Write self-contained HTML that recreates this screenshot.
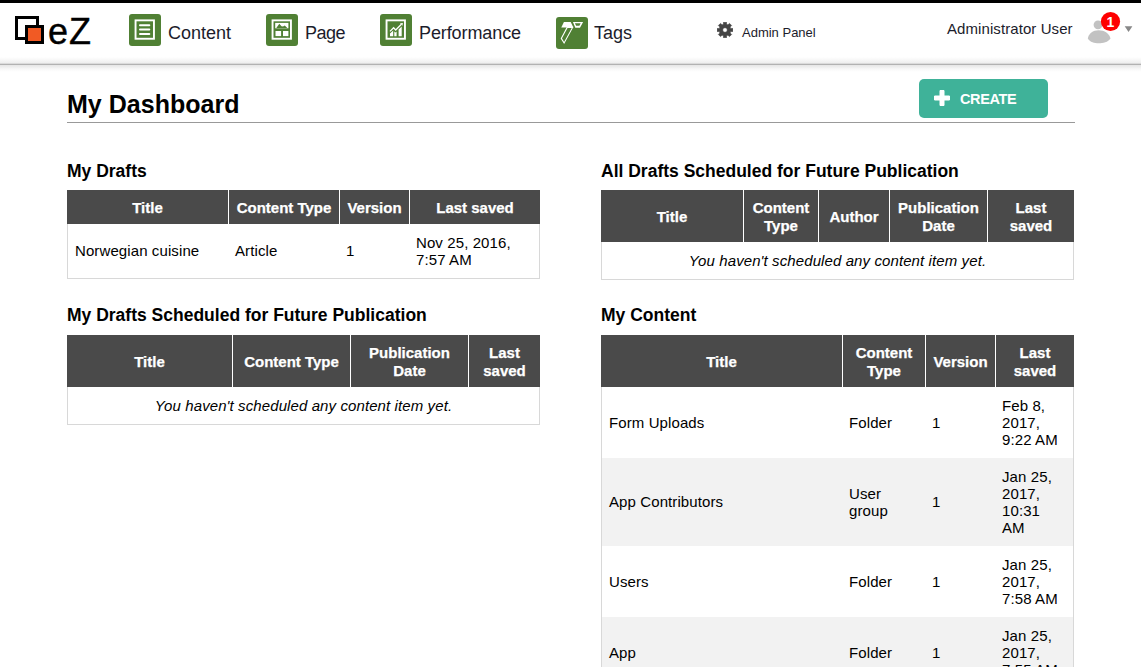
<!DOCTYPE html>
<html><head><meta charset="utf-8"><title>My Dashboard</title>
<style>
*{box-sizing:border-box}
html,body{margin:0;padding:0}
body{width:1141px;height:667px;overflow:hidden;background:#fff;font-family:"Liberation Sans",Arial,sans-serif;color:#111;position:relative}
#topbar{position:absolute;left:0;top:0;width:1141px;height:3px;background:#000}
#header{position:absolute;left:0;top:3px;width:1141px;height:61px;background:#fff}
#hshadow{position:absolute;left:0;top:57px;width:1141px;height:15px;background:linear-gradient(#fff 0px,#f7f7f7 3px,#eee 6px,#dbdbdb 6px,#dbdbdb 7px,#b2b2b2 7px,#b2b2b2 8px,#e6e6e6 8px,#eee 10px,#f8f8f8 12px,#fff 15px)}
.abs{position:absolute}
.nav{position:absolute;top:14px;height:32px}
.nav .ic{position:absolute;left:0;top:0;width:32px;height:32px;border-radius:3px;background:#508034}
.nav.tg .ic{top:3px}
.nav.tg .lb{left:38px}
.nav .lb{position:absolute;left:39px;top:8px;font-size:18px;line-height:22px;color:#1c1c2b;white-space:nowrap}
h1{position:absolute;left:67px;top:89px;margin:0;font-size:25px;line-height:30px;font-weight:bold;color:#000;letter-spacing:0.03px}
#hr{position:absolute;left:67px;top:122px;width:1008px;height:1px;background:#999}
#create{position:absolute;left:919px;top:79px;width:129px;height:39px;border-radius:5px;background:#3fb299;color:#fff;font-weight:bold;font-size:14px}
h2{position:absolute;margin:0;font-size:17.5px;line-height:20px;font-weight:bold;color:#000;white-space:nowrap}
table{position:absolute;border-collapse:separate;border-spacing:0;table-layout:fixed;font-size:15px;line-height:17px;color:#000}
th{background:#4a4a4a;color:#fff;-webkit-text-stroke:0.25px #fff;font-weight:bold;font-size:15px;line-height:18px;text-align:center;border-left:1px solid #fff;padding:2px 0 0 0;vertical-align:middle}
th:first-child{border-left:none}
td{padding:0 0 0 7px;vertical-align:middle;letter-spacing:0.1px}
td:first-child{border-left:1px solid #d8d8d8;padding-left:7px}
td:last-child{border-right:1px solid #d8d8d8}
tr:last-child td{border-bottom:1px solid #d8d8d8}
td.u{padding-bottom:2px}
td.empty{text-align:center;font-style:italic;padding:0}
tr.odd td{background:#f2f2f2}
</style></head><body>
<div id="header"></div>
<div id="hshadow"></div>
<div id="topbar"></div>

<!-- logo -->
<svg class="abs" style="left:14px;top:14px" width="34" height="34" viewBox="0 0 34 34">
<rect x="2.5" y="3.5" width="21" height="21" fill="#fff" stroke="#000" stroke-width="3"/>
<rect x="12.5" y="12.5" width="16" height="16" fill="#f15a24" stroke="#000" stroke-width="3"/>
</svg>
<div class="abs" style="left:48px;top:12px;font-size:36px;line-height:40px;color:#000;letter-spacing:1px;-webkit-text-stroke:0.4px #000">eZ</div>

<div class="nav" style="left:129px"><svg class="ic" width="32" height="32" viewBox="0 0 32 32"><rect x="6.55" y="6.35" width="18.4" height="18.4" fill="none" stroke="#fff" stroke-width="1.9"/><g stroke="#fff" stroke-width="2" stroke-linecap="round"><line x1="11" y1="11.3" x2="20.3" y2="11.3"/><line x1="11" y1="15.5" x2="20.3" y2="15.5"/><line x1="11" y1="19.9" x2="20.3" y2="19.9"/></g></svg><div class="lb">Content</div></div>
<div class="nav" style="left:266px"><svg class="ic" width="32" height="32" viewBox="0 0 32 32"><rect x="6.55" y="6.35" width="18.4" height="18.4" fill="none" stroke="#fff" stroke-width="1.9"/><rect x="9.2" y="8.9" width="13.2" height="5.4" fill="#fff"/><path d="M10.3 13.9 L13.3 9.7 L15.5 12.2 L17 12.5 L18.8 11.4 L21.3 13.9 Z" fill="#508034"/><rect x="9.5" y="17" width="5.6" height="5.1" fill="#fff"/><rect x="17" y="17" width="5.4" height="5.1" fill="#fff"/></svg><div class="lb" style="letter-spacing:-0.5px">Page</div></div>
<div class="nav" style="left:380px"><svg class="ic" width="32" height="32" viewBox="0 0 32 32"><rect x="6.55" y="6.35" width="18.4" height="18.4" fill="none" stroke="#fff" stroke-width="1.9"/><path d="M10 17.4 L13.6 13.8 L15.7 16 L21.4 10.3" fill="none" stroke="#fff" stroke-width="1.3"/><path d="M20 9.3 L22.9 9 L22.4 11.8 Z" fill="#fff"/><path d="M10 22.3 V19.6 L13.2 16.4 V22.3 Z M14.3 22.3 V17.4 L15.6 18.6 L16.6 17.6 V22.3 Z M18.6 22.3 V15.6 L21.7 12.5 V22.3 Z" fill="#fff"/></svg><div class="lb" style="letter-spacing:-0.1px">Performance</div></div>
<div class="nav tg" style="left:556px"><svg class="ic" width="32" height="32" viewBox="0 0 32 32"><path d="M7.95 5.1 H14.7 L17.4 10.6 H5.25 Z" fill="#fff"/><path d="M11.2 10.4 L16.6 10.4 L8.1 26 L5.3 21.4 Z" fill="none" stroke="#fff" stroke-width="1.1" stroke-linejoin="miter"/><path d="M16.95 4.95 H27.1 L24 10.8 H19.3 Z M18.9 6.15 H24.6 L23.4 8.7 H20.1 Z" fill="#fff" fill-rule="evenodd"/></svg><div class="lb">Tags</div></div>

<div class="abs" style="left:742px;top:25px;font-size:13px;line-height:15px;color:#1c1c2b">Admin Panel</div>
<div class="abs" style="left:947px;top:20px;font-size:15px;line-height:18px;color:#1c1c2b;letter-spacing:0.08px">Administrator User</div>

<svg class="abs" style="left:717px;top:22px" width="16" height="16" viewBox="0 0 16 16"><path d="M13.69 6.43 L15.86 6.49 L15.86 9.51 L13.69 9.57 L13.13 10.91 L14.62 12.49 L12.49 14.62 L10.91 13.13 L9.57 13.69 L9.51 15.86 L6.49 15.86 L6.43 13.69 L5.09 13.13 L3.51 14.62 L1.38 12.49 L2.87 10.91 L2.31 9.57 L0.14 9.51 L0.14 6.49 L2.31 6.43 L2.87 5.09 L1.38 3.51 L3.51 1.38 L5.09 2.87 L6.43 2.31 L6.49 0.14 L9.51 0.14 L9.57 2.31 L10.91 2.87 L12.49 1.38 L14.62 3.51 L13.13 5.09 Z M5.70 8.00 a2.30 2.30 0 1 0 4.60 0 a2.30 2.30 0 1 0 -4.60 0 Z" fill="#444" fill-rule="evenodd" stroke="#444" stroke-width="0.6" stroke-linejoin="round"/></svg>
<svg class="abs" style="left:1086px;top:10px" width="50" height="36" viewBox="0 0 50 36"><circle cx="12" cy="14.8" r="4.4" fill="#c2c2c2"/><path d="M1.8 28.5 C2.5 23.5 7 20.2 12.6 20.2 C18.5 20.2 23.5 23.5 24.5 28.5 C22 32.3 17 33.2 12.6 33.2 C8.5 33.2 4 32.3 1.8 28.5 Z" fill="#c2c2c2"/><circle cx="24.5" cy="11.5" r="9.6" fill="#fe0000"/><text x="24.3" y="16.6" font-family="Liberation Sans, Arial, sans-serif" font-weight="bold" font-size="14" fill="#fff" text-anchor="middle">1</text><path d="M38.7 16.2 H46.4 L42.55 22 Z" fill="#888"/></svg>
<h1>My Dashboard</h1>
<div id="create"><svg class="abs" style="left:15px;top:11px" width="16" height="16" viewBox="0 0 16 16"><path d="M6 0.5 H10 V6 H15.5 V10 H10 V15.5 H6 V10 H0.5 V6 H6 Z" fill="#fff" stroke="#fff" stroke-width="1" stroke-linejoin="round"/></svg><span class="abs" style="left:41px;top:12px;line-height:17px;font-size:14.5px;letter-spacing:-0.35px">CREATE</span></div>
<div id="hr"></div>

<h2 style="left:67px;top:161px">My Drafts</h2>
<table style="left:67px;top:190px;width:473px">
<colgroup><col style="width:161px"><col style="width:111px"><col style="width:70px"><col style="width:131px"></colgroup>
<thead><tr style="height:34px"><th>Title</th><th>Content Type</th><th>Version</th><th>Last saved</th></tr></thead>
<tbody><tr style="height:55px"><td class="u">Norwegian cuisine</td><td class="u">Article</td><td class="u">1</td><td>Nov 25, 2016,<br>7:57 AM</td></tr></tbody>
</table>

<h2 style="left:67px;top:305px">My Drafts Scheduled for Future Publication</h2>
<table style="left:67px;top:335px;width:473px">
<colgroup><col style="width:165px"><col style="width:118px"><col style="width:118px"><col style="width:72px"></colgroup>
<thead><tr style="height:52px"><th>Title</th><th>Content Type</th><th>Publication<br>Date</th><th>Last<br>saved</th></tr></thead>
<tbody><tr style="height:38px"><td class="empty" colspan="4">You haven't scheduled any content item yet.</td></tr></tbody>
</table>

<h2 style="left:601px;top:161px">All Drafts Scheduled for Future Publication</h2>
<table style="left:601px;top:190px;width:473px">
<colgroup><col style="width:142px"><col style="width:75px"><col style="width:71px"><col style="width:98px"><col style="width:87px"></colgroup>
<thead><tr style="height:52px"><th>Title</th><th>Content<br>Type</th><th>Author</th><th>Publication<br>Date</th><th>Last<br>saved</th></tr></thead>
<tbody><tr style="height:38px"><td class="empty" colspan="5">You haven't scheduled any content item yet.</td></tr></tbody>
</table>

<h2 style="left:601px;top:305px">My Content</h2>
<table style="left:601px;top:335px;width:473px">
<colgroup><col style="width:241px"><col style="width:83px"><col style="width:70px"><col style="width:79px"></colgroup>
<thead><tr style="height:52px"><th>Title</th><th>Content<br>Type</th><th>Version</th><th>Last<br>saved</th></tr></thead>
<tbody>
<tr style="height:71px"><td>Form Uploads</td><td>Folder</td><td>1</td><td>Feb 8,<br>2017,<br>9:22 AM</td></tr>
<tr class="odd" style="height:88px"><td class="u">App Contributors</td><td>User<br>group</td><td class="u">1</td><td>Jan 25,<br>2017,<br>10:31<br>AM</td></tr>
<tr style="height:71px"><td>Users</td><td>Folder</td><td>1</td><td>Jan 25,<br>2017,<br>7:58 AM</td></tr>
<tr class="odd" style="height:71px"><td>App</td><td>Folder</td><td>1</td><td>Jan 25,<br>2017,<br>7:55 AM</td></tr>
</tbody>
</table>
</body></html>
